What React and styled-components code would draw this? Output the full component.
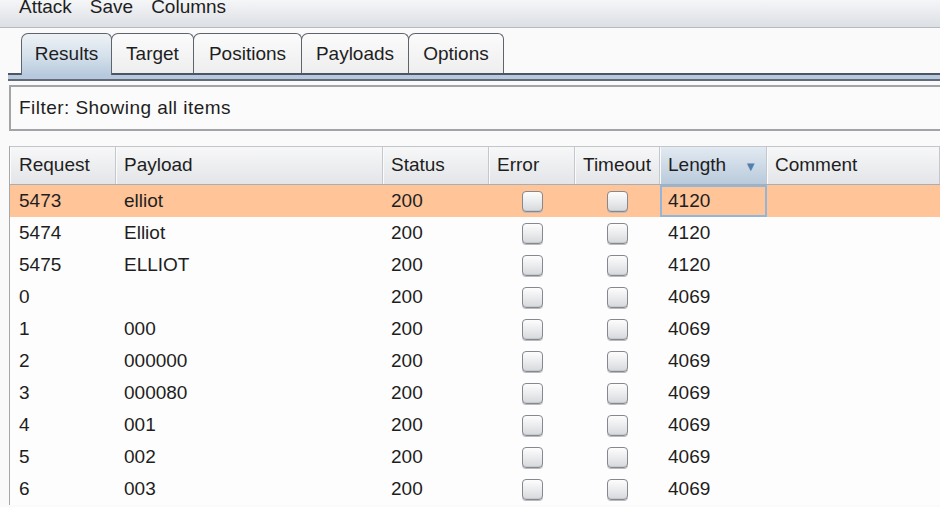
import React from "react";
import styled, { createGlobalStyle } from "styled-components";

const GlobalStyle = createGlobalStyle`
  html, body {
    margin: 0;
    padding: 0;
    background: #fafafa;
    overflow: hidden;
  }
  body {
    font-family: "Liberation Sans", Arial, sans-serif;
    font-size: 19px;
    color: #1e1e22;
  }
`;

const Page = styled.div`
  width: 940px;
  height: 507px;
  overflow: hidden;
`;

const MenuBar = styled.div`
  height: 27px;
  display: flex;
  align-items: flex-start;
  padding-left: 11px;
  background: linear-gradient(to bottom, #f5f6f8, #dcdfe4);
  border-bottom: 1px solid #b4b8bf;
`;

const MenuItem = styled.div`
  padding: 0 8px;
  margin-right: 2px;
  line-height: 13px;
`;

const TabRow = styled.div`
  display: flex;
  align-items: flex-end;
  margin-top: 5px;
  margin-left: 8px;
  padding-left: 13px;
  height: 40px;
`;

const Tab = styled.div`
  position: relative;
  z-index: ${(p) => (p.$active ? 2 : 1)};
  height: ${(p) => (p.$active ? "42px" : "40px")};
  margin-bottom: ${(p) => (p.$active ? "-2px" : "0")};
  width: ${(p) => p.$w}px;
  box-sizing: border-box;
  margin-left: -1px;
  display: flex;
  align-items: flex-start;
  justify-content: center;
  padding-top: 9px;
  border: 1.5px solid #5f636b;
  border-bottom: none;
  border-radius: 7px 6px 0 0;
  background: ${(p) =>
    p.$active
      ? "linear-gradient(to bottom, #eef2f6 0%, #d4e0eb 55%, #b7cadd 100%)"
      : "linear-gradient(to bottom, #fbfbfb, #eeeeef)"};
  &:first-child {
    margin-left: 0;
  }
`;

const Strip = styled.div`
  margin-left: 8px;
  height: 4px;
  background: #b6c9de;
  border-top: 2px solid #4d5463;
  border-bottom: 2px solid #646b78;
`;

const FilterBox = styled.div`
  margin: 4px -20px 0 9px;
  height: 46px;
  box-sizing: border-box;
  border: 2px solid #a3a4a7;
  background: #fbfbfb;
  display: flex;
  align-items: center;
  padding-left: 8px;
  padding-bottom: 1px;
  letter-spacing: 0.45px;
`;

const Table = styled.div`
  margin: 15px 0 0 9px;
  border-left: 1px solid #a6a8ac;
`;

const cols = "106px 267px 106px 86px 85px 107px 1fr";

const HeaderRow = styled.div`
  display: grid;
  grid-template-columns: ${cols};
  height: 39px;
  box-sizing: border-box;
  border-top: 1px solid #c3c6ca;
  border-bottom: 1.5px solid #a9adb4;
  background: linear-gradient(to bottom, #f7f7f8, #e3e5e8);
`;

const HeaderCell = styled.div`
  display: flex;
  align-items: center;
  justify-content: space-between;
  padding: 0 9px 1px 8px;
  border-right: 1px solid #c4c8cd;
  box-shadow: inset 1px 0 0 #fbfbfc;
  background: ${(p) =>
    p.$sorted ? "linear-gradient(to bottom, #e2eaf2, #b9cadb)" : "transparent"};
  white-space: nowrap;
  &:first-child {
    padding-left: 9px;
  }
`;

const SortArrow = styled.span`
  font-size: 13px;
  color: #527fae;
  margin-top: 2px;
`;

const Row = styled.div`
  display: grid;
  grid-template-columns: ${cols};
  height: 32px;
  background: ${(p) => (p.$selected ? "#ffc497" : "#fdfdfd")};
`;

const Cell = styled.div`
  display: flex;
  align-items: center;
  justify-content: ${(p) => (p.$center ? "center" : "flex-start")};
  box-sizing: border-box;
  border: ${(p) => (p.$focus ? "2px solid #93b6d8" : "none")};
  padding-left: ${(p) => (p.$center ? "0" : p.$focus ? "6px" : "8px")};
  &:first-child {
    padding-left: 9px;
  }
`;

const Check = styled.span`
  width: 21px;
  height: 21px;
  box-sizing: border-box;
  border: 1.5px solid #85888e;
  border-radius: 4px;
  background: linear-gradient(to bottom, #fdfdfd, #e9eaec 55%, #d6d8db);
  box-shadow: inset 0 -1px 0 #c8cace, 0 1px 0 #b9bbbf;
`;

const tabs = [
  { label: "Results", w: 91 },
  { label: "Target", w: 83 },
  { label: "Positions", w: 109 },
  { label: "Payloads", w: 108 },
  { label: "Options", w: 96 },
];

const rows = [
  ["5473", "elliot", "4120"],
  ["5474", "Elliot", "4120"],
  ["5475", "ELLIOT", "4120"],
  ["0", "", "4069"],
  ["1", "000", "4069"],
  ["2", "000000", "4069"],
  ["3", "000080", "4069"],
  ["4", "001", "4069"],
  ["5", "002", "4069"],
  ["6", "003", "4069"],
];

export default function App() {
  return (
    <Page>
      <GlobalStyle />
      <MenuBar>
        <MenuItem>Attack</MenuItem>
        <MenuItem>Save</MenuItem>
        <MenuItem>Columns</MenuItem>
      </MenuBar>

      <TabRow>
        {tabs.map((t, i) => (
          <Tab key={t.label} $w={t.w} $active={i === 0}>
            {t.label}
          </Tab>
        ))}
      </TabRow>
      <Strip />

      <FilterBox>Filter: Showing all items</FilterBox>

      <Table>
        <HeaderRow>
          <HeaderCell>Request</HeaderCell>
          <HeaderCell>Payload</HeaderCell>
          <HeaderCell>Status</HeaderCell>
          <HeaderCell>Error</HeaderCell>
          <HeaderCell>Timeout</HeaderCell>
          <HeaderCell $sorted>
            Length <SortArrow>▼</SortArrow>
          </HeaderCell>
          <HeaderCell>Comment</HeaderCell>
        </HeaderRow>
        {rows.map((r, i) => (
          <Row key={r[0]} $selected={i === 0}>
            <Cell>{r[0]}</Cell>
            <Cell>{r[1]}</Cell>
            <Cell>200</Cell>
            <Cell $center>
              <Check />
            </Cell>
            <Cell $center>
              <Check />
            </Cell>
            <Cell $focus={i === 0}>{r[2]}</Cell>
            <Cell />
          </Row>
        ))}
      </Table>
    </Page>
  );
}
